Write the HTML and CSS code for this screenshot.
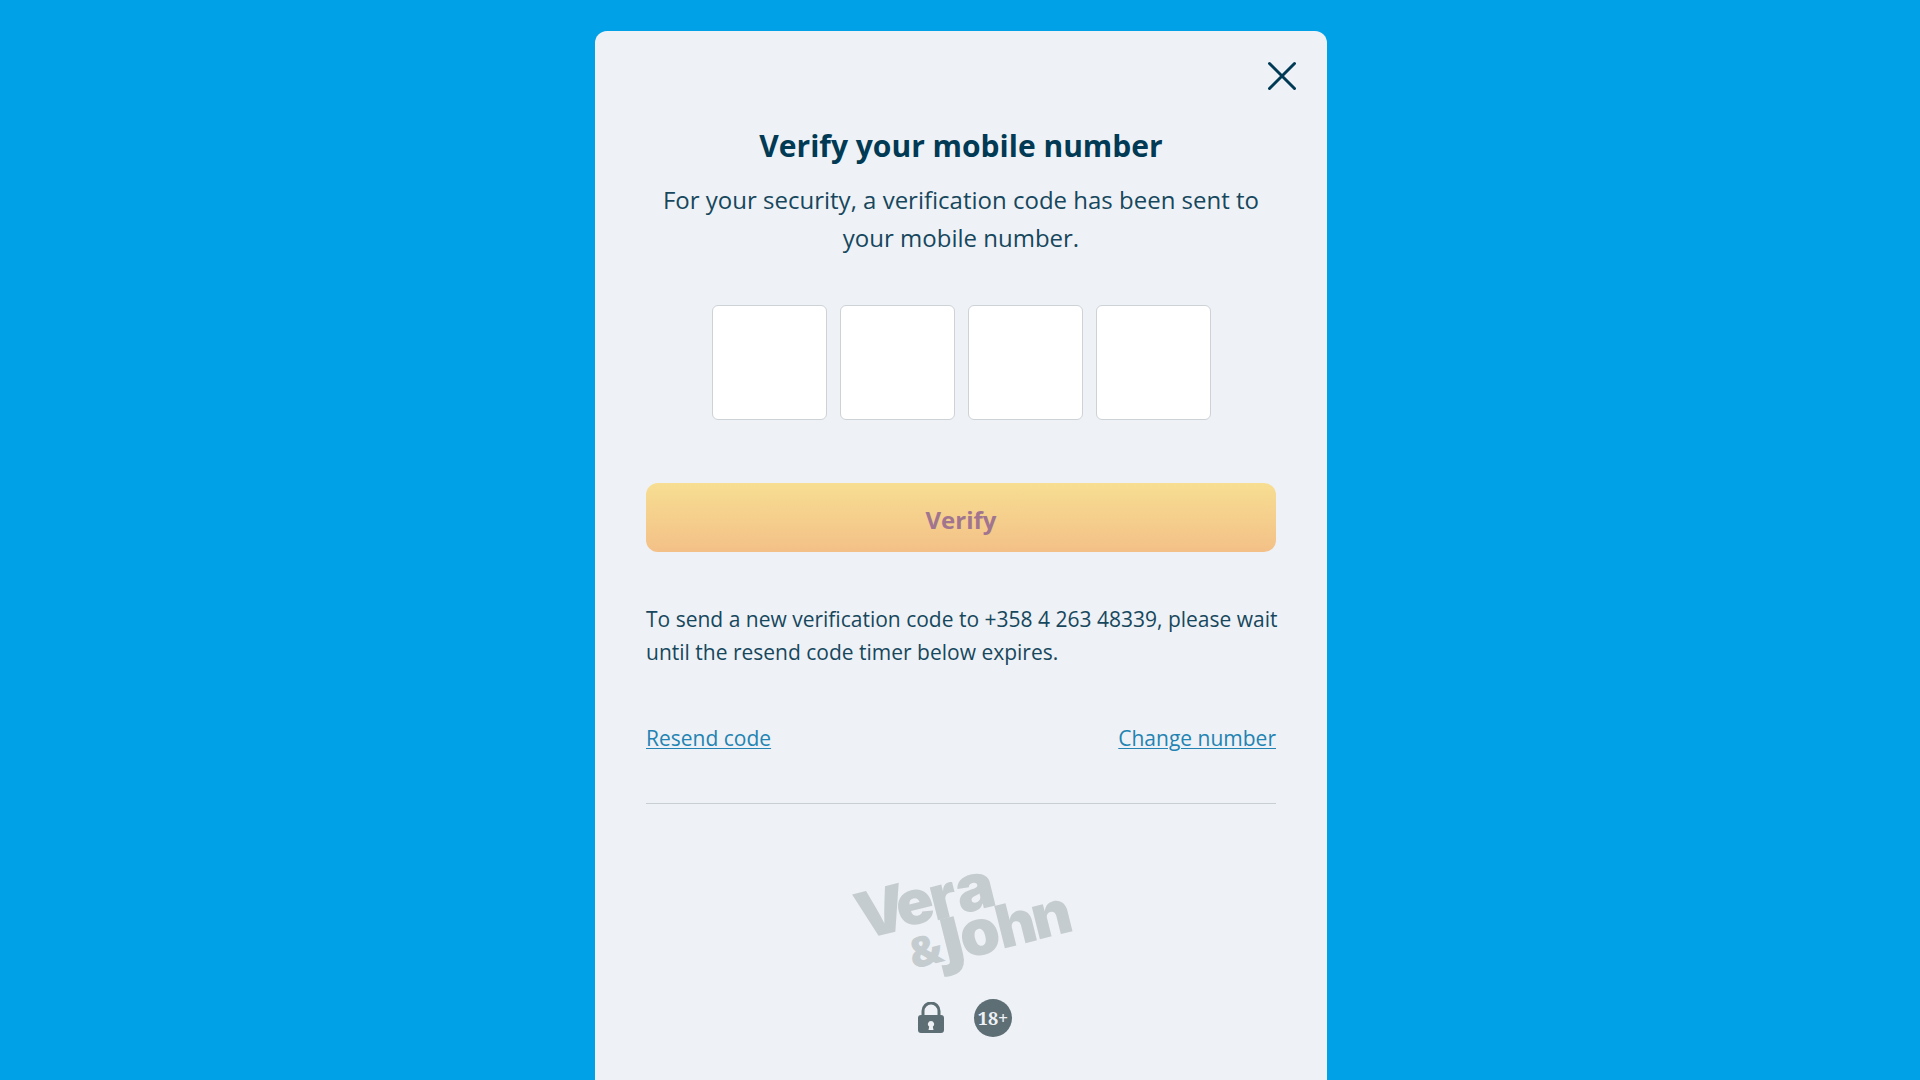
FILE: index.html
```html
<!DOCTYPE html>
<html lang="en">
<head>
<meta charset="utf-8">
<meta name="viewport" content="width=device-width, initial-scale=1">
<title>Verify your mobile number</title>
<link rel="stylesheet" href="styles.css">
</head>
<body>
<main class="card">
  <div class="topbar">
    <button class="close" type="button" aria-label="Close">
      <svg width="30" height="30" viewBox="0 0 30 30" fill="none" stroke="currentColor" stroke-width="3" stroke-linecap="round"><path d="M2.500 2.500l25 25M27.500 2.500l-25 25"/></svg>
    </button>
  </div>
  <div class="content">
    <h1 class="title">Verify your mobile number</h1>
    <p class="intro">For your security, a verification code has been sent to your mobile number.</p>
    <form class="form">
      <div class="code">
        <input class="digit" type="text" inputmode="numeric" maxlength="1" aria-label="Digit 1">
        <input class="digit" type="text" inputmode="numeric" maxlength="1" aria-label="Digit 2">
        <input class="digit" type="text" inputmode="numeric" maxlength="1" aria-label="Digit 3">
        <input class="digit" type="text" inputmode="numeric" maxlength="1" aria-label="Digit 4">
      </div>
      <button class="verify" type="submit">Verify</button>
    </form>
    <p class="note">To send a new verification code to +358 4 263 48339, please wait <br>until the resend code timer below expires.</p>
    <nav class="links">
      <a class="link" href="#resend">Resend code</a>
      <a class="link" href="#change">Change number</a>
    </nav>
    <footer class="footer">
      <svg class="logo" width="240" height="120" viewBox="0 0 240 120" role="img" aria-label="Vera &amp; John">
        <text transform="translate(21 80) rotate(-14)" font-size="64">V</text>
        <text transform="translate(60 68) rotate(-14)" font-size="62">e</text>
        <text transform="translate(94 61) rotate(-14)" font-size="62">r</text>
        <text transform="translate(120 54) rotate(-14)" font-size="65">a</text>
        <text class="logo-alt" transform="translate(72 109) rotate(-14)" font-size="42">&amp;</text>
        <text class="logo-alt logo-j" transform="translate(106 102) rotate(-14)" font-size="58">J</text>
        <text transform="translate(124 99) rotate(-14)" font-size="64">o</text>
        <text transform="translate(161 89) rotate(-14)" font-size="60">h</text>
        <text transform="translate(196 80) rotate(-14)" font-size="61">n</text>
      </svg>
      <div class="badges">
        <svg class="lock" width="26" height="32" viewBox="0 0 26 32" role="img" aria-label="Secure">
          <path d="M5 14V9a8 8 0 0 1 16 0v5" fill="none" stroke="currentColor" stroke-width="3"/>
          <path fill="currentColor" fill-rule="evenodd" d="M3 13h20q3 0 3 3v12q0 3-3 3H3q-3 0-3-3V16q0-3 3-3zM13 19a3.200 3.200 0 0 0-1.800 5.800L10.500 28h5l-.7-3.200A3.200 3.200 0 0 0 13 19z"/>
        </svg>
        <span class="age">18+</span>
      </div>
    </footer>
  </div>
</main>
</body>
</html>
```
FILE: styles.css
```css
* { box-sizing: border-box; }
body {
  margin: 0;
  min-height: 100vh;
  padding: 31px 16px 0 18px;
  display: flex;
  justify-content: center;
  background: #00a1e7;
  color: #17475d;
  font-family: "Open Sans", "Noto Sans", sans-serif;
}
.card {
  width: 100%;
  max-width: 732px;
  background: #eef2f6;
  border-radius: 12px 12px 0 0;
}
.topbar {
  display: flex;
  justify-content: flex-end;
  padding: 30px 30px 0;
}
.close {
  display: flex;
  padding: 0;
  border: 0;
  background: none;
  color: #003a54;
  cursor: pointer;
}
.content { padding: 33px 51px 40px; }
.title {
  margin: 0;
  font-size: 30px;
  line-height: 44px;
  font-weight: 700;
  text-align: center;
  color: #003a54;
}
.intro {
  margin: 13px 0 0;
  font-size: 24px;
  line-height: 38px;
  text-align: center;
}
.code {
  display: flex;
  justify-content: center;
  gap: 13px;
  margin-top: 48px;
}
.digit {
  width: 115px;
  height: 115px;
  padding: 0;
  border: 1px solid #cdd2d6;
  border-radius: 6px;
  background: #fff;
  color: inherit;
  font: inherit;
  font-size: 48px;
  text-align: center;
}
.verify {
  display: block;
  width: 100%;
  height: 69px;
  margin-top: 63px;
  padding: 3px 0 0;
  border: 0;
  border-radius: 12px;
  background: linear-gradient(#f7de92, #f3c087);
  color: #a1758f;
  font: inherit;
  font-size: 24px;
  font-weight: 700;
}
.note {
  margin: 51px 0 0;
  font-size: 21px;
  line-height: 33px;
  white-space: nowrap;
}
.links {
  display: flex;
  justify-content: space-between;
  margin-top: 53px;
  font-size: 21px;
  line-height: 32px;
}
.link {
  color: #2383b2;
  text-underline-offset: 2px;
  text-decoration-thickness: 1px;
}
.footer {
  display: flex;
  flex-direction: column;
  align-items: center;
  margin-top: 49px;
  padding-top: 56px;
  border-top: 1px solid #c8cfd4;
}
.logo {
  overflow: visible;
  fill: #c5cccf;
  font-family: Inter, "Open Sans", sans-serif;
  font-weight: 900;
}
.logo-alt {
  font-family: "Open Sans", "Noto Sans", sans-serif;
  font-weight: 800;
}
.logo-j {
  stroke: #c5cccf;
  stroke-width: 3;
}
.badges {
  display: flex;
  align-items: center;
  gap: 30px;
  margin-top: 19px;
  padding-left: 8px;
  color: #5d6e74;
}
.age {
  width: 38px;
  height: 38px;
  border-radius: 50%;
  background: #5d6e74;
  color: #eef2f6;
  font-family: "Noto Serif", "Liberation Serif", serif;
  font-size: 18px;
  font-weight: 700;
  line-height: 38px;
  text-align: center;
}
```
